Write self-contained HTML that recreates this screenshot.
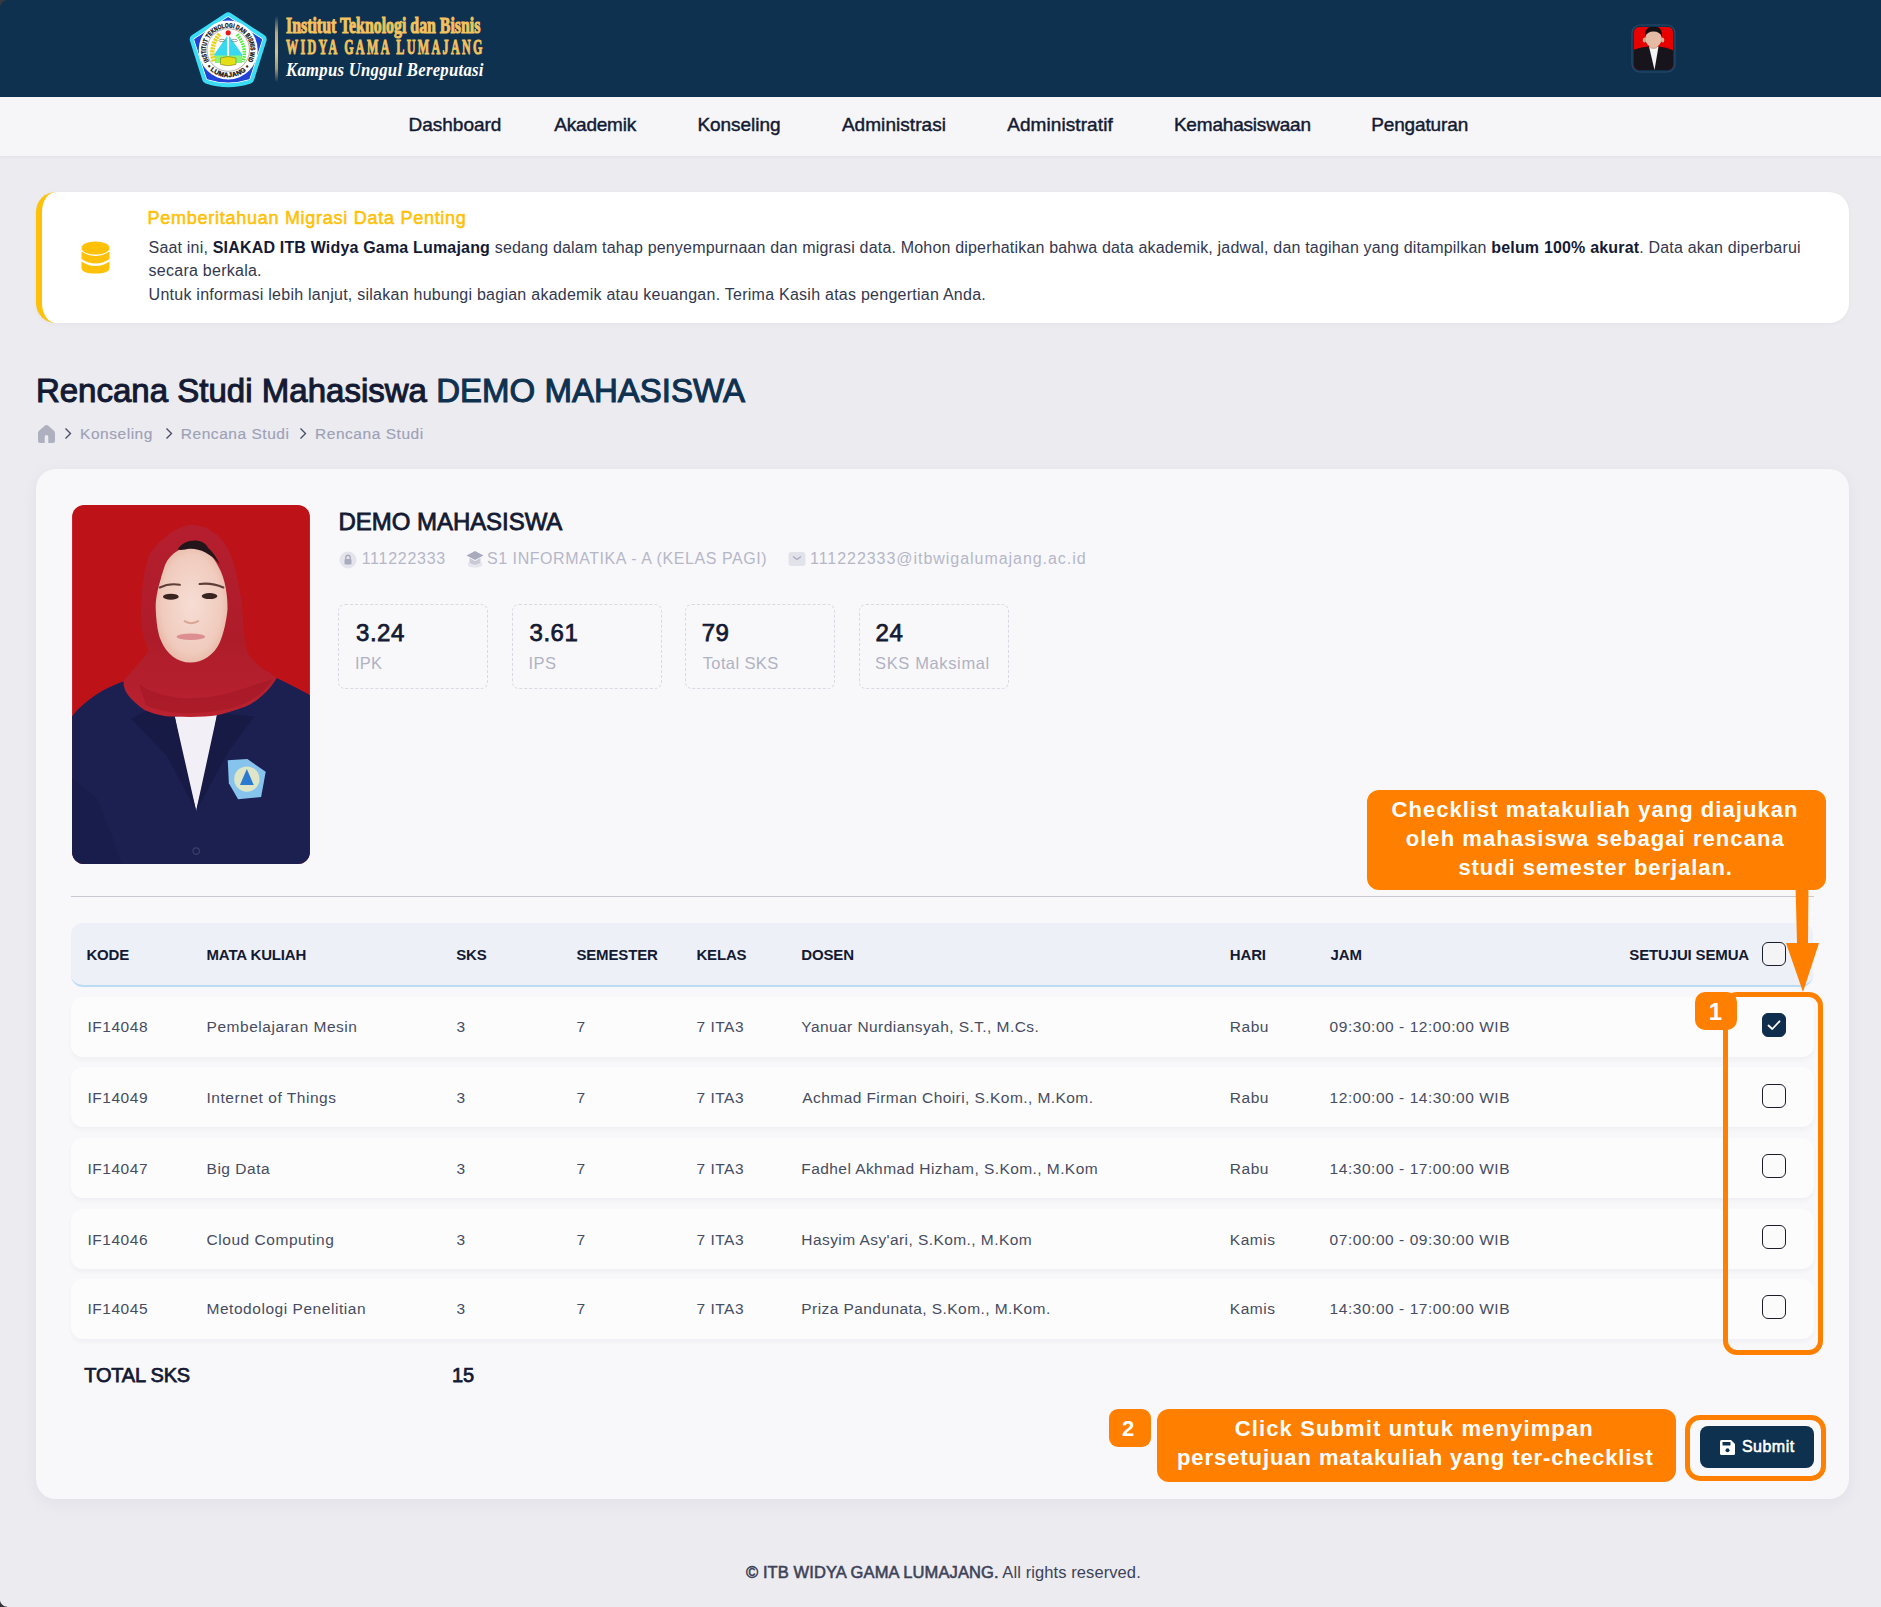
<!DOCTYPE html>
<html><head><meta charset="utf-8">
<style>
*{box-sizing:border-box;margin:0;padding:0}
html,body{width:1881px;height:1607px;overflow:hidden}
body{position:relative;background:#ebebf0;font-family:"Liberation Sans",sans-serif;color:#141a33}
.t{position:absolute;white-space:pre;font-family:"Liberation Sans",sans-serif}
.b{position:absolute}
#hdr{left:0;top:0;width:1881px;height:97px;background:#0f3150}
#nav{left:0;top:97px;width:1881px;height:59px;background:#f6f6f8;box-shadow:0 1px 3px rgba(40,40,80,0.05)}
#alert{left:36px;top:192px;width:1813px;height:131px;background:#fff;border-left:6px solid #ffc107;border-radius:20px;box-shadow:0 1px 4px rgba(30,30,70,0.04)}
#card{left:36px;top:469px;width:1813px;height:1030px;background:#f8f8fa;border-radius:20px;box-shadow:0 4px 16px rgba(30,30,70,0.05)}
.stat{top:604px;width:150px;height:85px;border:1px dashed #d8d9e2;border-radius:7px}
.row{left:71px;width:1743px;height:60px;background:#fcfcfd;border-radius:12px;box-shadow:0 3px 5px rgba(40,40,90,0.035)}
.cb{left:1762px;width:24px;height:24px;border:1.5px solid #1b1d2b;border-radius:6px;background:#fbfbfc}
.org{background:#ff8000}
</style></head>
<body>
<div class="b" id="hdr"></div>
<div class="b" id="nav"></div>

<!-- logo -->
<svg class="b" style="left:180px;top:0px" width="100" height="97" viewBox="180 0 100 97">
  <defs>
    <path id="arcT" d="M208.89 61.15 A22.3 22.3 0 1 1 247.51 61.15"/>
    <path id="arcB" d="M203.46 61.54 A27.3 27.3 0 0 0 252.94 61.54"/>
  </defs>
  <path d="M228.2 17.6 L261.4 39.5 L249 78.6 Q228.2 85.6 207.4 78.6 L195 39.5 Z" fill="#3adcf6" stroke="#3adcf6" stroke-width="10.5" stroke-linejoin="round"/>
  <path d="M228.2 16.6 L262.6 39 L249.6 79.4 Q228.2 86.3 206.8 79.4 L193.8 39 Z" fill="none" stroke="#ffffff" stroke-width="1" stroke-linejoin="round"/>
  <path d="M228.2 18 L261.4 39.6 L248.8 78.6 Q228.2 85 207.6 78.6 L195 39.6 Z" fill="#2343d6" stroke="#2343d6" stroke-width="1.5" stroke-linejoin="round"/>
  <circle cx="228.2" cy="50" r="29.5" fill="#ffffff"/>
  <text font-family="Liberation Sans" font-weight="700" font-size="6.6" fill="#111" stroke="#111" stroke-width="0.3"><textPath href="#arcT" textLength="115" lengthAdjust="spacingAndGlyphs">INSTITUT TEKNOLOGI DAN BISNIS WIDYA GAMA</textPath></text>
  <text font-family="Liberation Sans" font-weight="700" font-size="6.6" fill="#111" stroke="#111" stroke-width="0.3" letter-spacing="0.3"><textPath href="#arcB" startOffset="50%" text-anchor="middle">• LUMAJANG •</textPath></text>
  <circle cx="228.2" cy="50" r="21.3" fill="#fff" stroke="#9a9a9a" stroke-width="0.8"/>
  <path d="M219.5 34 Q209 47 214 62" fill="none" stroke="#e6d41a" stroke-width="4.5" stroke-dasharray="2.2 0.8"/>
  <path d="M237 34.5 Q247.5 47 243 62" fill="none" stroke="#4ded3a" stroke-width="3.5" stroke-dasharray="1.6 1"/>
  <rect x="215" y="54.5" width="27" height="8.5" fill="#5ef04a" opacity="0.75"/>
  <path d="M228.2 34.5 L213.5 55.5 L243 55.5 Z" fill="#38d8ef"/>
  <rect x="227.3" y="35" width="1.8" height="21" fill="#ffffff"/>
  <ellipse cx="222" cy="40.5" rx="3" ry="1.2" fill="none" stroke="#777" stroke-width="0.7"/>
  <ellipse cx="234.5" cy="40.5" rx="3" ry="1.2" fill="none" stroke="#777" stroke-width="0.7"/>
  <circle cx="228.2" cy="32.8" r="2.6" fill="#e8181a"/>
  <path d="M220.5 58 Q228.2 55 236 58 L236 64.5 Q228.2 67 220.5 64.5 Z" fill="#e4de16" stroke="#6a6a20" stroke-width="0.5"/>
</svg>
<div class="b" style="left:274.5px;top:16px;width:3px;height:66px;background:linear-gradient(#0f3150,#b9a878 25%,#d6c288 55%,#a89870 80%,#0f3150)"></div>
<div class="t" style="left:286px;top:15px;font-family:'Liberation Serif',serif;font-weight:700;font-size:22.5px;line-height:22.5px;color:#f2c35e;transform:scaleX(0.705);transform-origin:0 0;-webkit-text-stroke:1px #f2c35e">Institut Teknologi dan Bisnis</div>
<div class="t" style="left:286px;top:35.5px;font-family:'Liberation Serif',serif;font-weight:700;font-size:22px;line-height:22px;color:#f2c35e;transform:scaleX(0.55);transform-origin:0 0;letter-spacing:4.2px;-webkit-text-stroke:1px #f2c35e">WIDYA GAMA LUMAJANG</div>
<div class="t" style="left:286px;top:60px;font-family:'Liberation Serif',serif;font-style:italic;font-weight:700;font-size:19px;line-height:19px;color:#ffffff;transform:scaleX(0.88);transform-origin:0 0;letter-spacing:0.3px">Kampus Unggul Bereputasi</div>

<!-- avatar -->
<svg class="b" style="left:1631px;top:24px" width="45" height="49" viewBox="0 0 45 49">
  <rect x="1" y="1" width="43" height="47" rx="8" fill="none" stroke="#4a6a88" stroke-width="1.2" opacity="0.45"/>
  <defs><clipPath id="av"><rect x="3" y="3" width="39" height="43" rx="5"/></clipPath></defs>
  <g clip-path="url(#av)">
    <rect x="0" y="0" width="45" height="49" fill="#e60000"/>
    <path d="M0 27 Q8 23 18 22.5 L27.5 22.5 Q37 23 45 28 L45 49 L0 49 Z" fill="#18141c"/>
    <path d="M18 22.5 L27.5 22.5 L23.5 46 Z" fill="#f4f4f4"/>
    <ellipse cx="13.3" cy="16" rx="1.6" ry="2.5" fill="#d8ab95"/>
    <ellipse cx="31.7" cy="16" rx="1.6" ry="2.5" fill="#d8ab95"/>
    <path d="M18.5 20 L26.5 20 L26 24 Q22.5 26 19 24 Z" fill="#d8ab95"/>
    <ellipse cx="22.5" cy="14.5" rx="8.3" ry="9" fill="#e4bca6"/>
    <path d="M14 13 Q13.5 2 22.5 2.5 Q31.5 2 31 13 Q29 7.5 22.5 7.5 Q16 7.5 14 13 Z" fill="#141014"/>
  </g>
</svg>

<!-- alert -->
<div class="b" id="alert"></div>
<svg class="b" style="left:81px;top:241px" width="29" height="33" viewBox="0 0 29 33">
  <ellipse cx="14.5" cy="7" rx="14" ry="6.6" fill="#ffc107"/>
  <path d="M0.5 10.5 Q14.5 19.5 28.5 10.5 L28.5 18 Q14.5 27 0.5 18 Z" fill="#ffc107"/>
  <path d="M0.5 20.5 Q14.5 29.5 28.5 20.5 L28.5 26.5 Q28.5 32.5 14.5 32.5 Q0.5 32.5 0.5 26.5 Z" fill="#ffc107"/>
</svg>

<!-- breadcrumb icons -->
<svg class="b" style="left:37px;top:424px" width="19" height="19" viewBox="0 0 19 19">
  <path d="M1 9.2 Q1 7.6 2.3 6.5 L7.4 2 Q9.5 0.2 11.6 2 L16.7 6.5 Q18 7.6 18 9.2 L18 17 Q18 19 16 19 L11.3 19 L11.3 12.8 Q11.3 11 9.5 11 Q7.7 11 7.7 12.8 L7.7 19 L3 19 Q1 19 1 17 Z" fill="#aeb0c0"/>
</svg>
<svg class="b" style="left:62px;top:426px" width="12" height="15" viewBox="0 0 12 15"><path d="M3.5 2.5 L8.5 7.5 L3.5 12.5" fill="none" stroke="#484d66" stroke-width="1.35"/></svg>
<svg class="b" style="left:163px;top:426px" width="12" height="15" viewBox="0 0 12 15"><path d="M3.5 2.5 L8.5 7.5 L3.5 12.5" fill="none" stroke="#484d66" stroke-width="1.35"/></svg>
<svg class="b" style="left:297px;top:426px" width="12" height="15" viewBox="0 0 12 15"><path d="M3.5 2.5 L8.5 7.5 L3.5 12.5" fill="none" stroke="#484d66" stroke-width="1.35"/></svg>

<!-- card -->
<div class="b" id="card"></div>

<!-- photo -->
<svg class="b" style="left:70px;top:500px" width="245" height="370" viewBox="0 0 1064 1607">
  <defs><clipPath id="ph"><rect x="9" y="22" width="1033" height="1559" rx="52"/></clipPath>
  <radialGradient id="skin" cx="0.5" cy="0.5" r="0.6"><stop offset="0" stop-color="#f7ddd5"/><stop offset="0.7" stop-color="#f0cbbd"/><stop offset="1" stop-color="#e2ad9c"/></radialGradient>
  <linearGradient id="hij" x1="0" y1="0" x2="0" y2="1"><stop offset="0" stop-color="#b51e2e"/><stop offset="0.6" stop-color="#ae1c2a"/><stop offset="1" stop-color="#ba2230"/></linearGradient></defs>
  <g clip-path="url(#ph)">
    <rect x="0" y="0" width="1064" height="1607" fill="#bd1218"/>
    <path d="M0 950 C60 870 150 815 240 785 L460 940 L640 925 L880 765 C950 795 1010 830 1064 860 L1064 1607 L0 1607 Z" fill="#1b2050"/>
    <path d="M120 1300 C160 1400 200 1500 230 1607 L0 1607 L0 1200 Z" fill="#181d48" opacity="0.7"/>
    <path d="M455 940 L640 925 L610 1100 L548 1350 L495 1150 Z" fill="#f2eff6"/>
    <path d="M265 950 L330 915 L455 940 L548 1350 L420 1110 Z" fill="#161a44"/>
    <path d="M800 940 L640 925 L548 1350 L690 1090 Z" fill="#161a44"/>
    <path d="M520 108 C470 115 400 160 352 227 C325 270 312 380 309 465 C308 540 315 600 341 654 C320 690 270 740 233 784 C228 820 250 860 325 913 C380 935 420 942 455 940 C520 944 590 942 639 935 C700 920 760 900 785 886 C830 860 870 820 898 773 C870 750 850 740 838 735 C800 700 775 680 768 654 C758 600 752 560 752 519 C748 450 740 400 730 357 C720 300 705 260 693 227 C670 180 640 150 628 146 C600 120 560 108 520 108 Z" fill="url(#hij)"/>
    <path d="M300 800 C400 870 560 880 720 830 C780 810 840 790 880 778 C850 830 790 880 700 905 C560 935 420 935 330 890 Z" fill="#9c1522" opacity="0.45"/>
    <path d="M536 200 C470 205 420 245 406 303 C385 370 372 420 372 465 C374 525 380 575 394 608 C420 672 468 706 522 706 C576 706 626 672 650 620 C668 578 680 522 684 476 C686 420 674 340 646 292 C622 240 582 205 536 200 Z" fill="url(#skin)"/>
    <path d="M468 214 C495 170 575 160 600 208 C620 225 640 255 650 280 C610 230 560 210 520 212 C500 214 480 222 468 214 Z" fill="#24151a"/>
    <path d="M390 380 Q430 360 477 368" fill="none" stroke="#5e3e38" stroke-width="9" stroke-linecap="round"/>
    <path d="M563 365 Q615 358 666 380" fill="none" stroke="#5e3e38" stroke-width="9" stroke-linecap="round"/>
    <ellipse cx="438" cy="420" rx="34" ry="13" fill="#3a2420"/>
    <ellipse cx="606" cy="417" rx="34" ry="13" fill="#3a2420"/>
    <path d="M495 525 Q525 545 560 525" fill="none" stroke="#d9a595" stroke-width="9"/>
    <ellipse cx="525" cy="594" rx="62" ry="14" fill="#db8f90"/>
    <path d="M685 1130 L770 1125 L850 1180 L830 1290 L730 1300 L690 1230 Z" fill="#86c4ee"/>
    <circle cx="768" cy="1212" r="55" fill="#dfe6c8"/>
    <path d="M768 1168 L738 1238 L798 1238 Z" fill="#2a7ad0"/>
    <circle cx="548" cy="1525" r="14" fill="none" stroke="#3a3f6a" stroke-width="5"/>
  </g>
</svg>

<!-- info icons -->
<svg class="b" style="left:339px;top:551px" width="18" height="18" viewBox="0 0 18 18">
  <circle cx="9" cy="9" r="8.5" fill="#e4e5ec"/>
  <rect x="5.5" y="8" width="7" height="5.5" rx="1" fill="#a9abbd"/>
  <path d="M6.8 8 L6.8 6.5 Q6.8 4.3 9 4.3 Q11.2 4.3 11.2 6.5 L11.2 8" fill="none" stroke="#a9abbd" stroke-width="1.4"/>
</svg>
<svg class="b" style="left:466px;top:550px" width="18" height="19" viewBox="0 0 18 19">
  <path d="M9 1 L17.5 5.5 L9 10 L0.5 5.5 Z" fill="#a9abbd"/>
  <path d="M3.5 8 L3.5 13 Q9 17 14.5 13 L14.5 8 L9 11 Z" fill="#c9cad6"/>
  <path d="M2 12 Q9 19 16 12 L16 16 Q9 19 2 16 Z" fill="#e4e5ec"/>
</svg>
<svg class="b" style="left:788px;top:551px" width="18" height="16" viewBox="0 0 18 16">
  <rect x="0.5" y="1" width="17" height="14" rx="3" fill="#e1e2ea"/>
  <path d="M5 5.5 L9 8.5 L13 5.5" fill="none" stroke="#a9abbd" stroke-width="1.3"/>
</svg>

<!-- stats -->
<div class="b stat" style="left:338px"></div>
<div class="b stat" style="left:512px"></div>
<div class="b stat" style="left:685px"></div>
<div class="b stat" style="left:859px"></div>

<!-- divider -->
<div class="b" style="left:71px;top:896px;width:1743px;height:1px;background:#c8c9d3"></div>

<!-- table header -->
<div class="b" style="left:71px;top:923px;width:1742px;height:64px;background:#edf0f7;border-radius:12px;border-bottom:2px solid #bcdcf4"></div>
<div class="b cb" style="top:942px;background:#f4f4f6"></div>

<!-- rows -->
<div class="b row" style="top:997px"></div>
<div class="b row" style="top:1067px"></div>
<div class="b row" style="top:1138px"></div>
<div class="b row" style="top:1209px"></div>
<div class="b row" style="top:1279px"></div>

<div class="b cb" style="top:1013px;background:#0f2d4c;border-color:#0f2d4c"></div>
<svg class="b" style="left:1762px;top:1013px" width="24" height="24" viewBox="0 0 24 24"><path d="M6.5 12.5 L10.3 16 L17.5 8.3" fill="none" stroke="#fff" stroke-width="1.8" stroke-linecap="round" stroke-linejoin="round"/></svg>
<div class="b cb" style="top:1084px"></div>
<div class="b cb" style="top:1154px"></div>
<div class="b cb" style="top:1225px"></div>
<div class="b cb" style="top:1295px"></div>

<!-- submit -->
<div class="b" style="left:1700px;top:1426px;width:114px;height:42px;background:#0f3150;border-radius:8px"></div>
<svg class="b" style="left:1720px;top:1440px" width="15" height="15" viewBox="0 0 15 15">
  <path d="M1.5 0 L11 0 L15 4 L15 13.5 Q15 15 13.5 15 L1.5 15 Q0 15 0 13.5 L0 1.5 Q0 0 1.5 0 Z" fill="#fff"/>
  <rect x="2.5" y="2" width="8" height="3.5" rx="0.5" fill="#0f3150"/>
  <circle cx="7.5" cy="10.3" r="2" fill="#0f3150"/>
</svg>

<!-- annotations -->
<div class="b org" style="left:1367px;top:790px;width:459px;height:100px;border-radius:12px"></div>
<svg class="b" style="left:1780px;top:885px" width="45" height="110" viewBox="0 0 45 110">
  <path d="M15.5 0 L28.5 0 L28 58 L39 58 L23 107 L6 58 L17 58 Z" fill="#ff8000"/>
</svg>
<div class="b" style="left:1723px;top:992px;width:100px;height:363px;border:5px solid #ff8000;border-radius:14px"></div>
<div class="b org" style="left:1695px;top:992px;width:42px;height:38px;border-radius:10px"></div>
<div class="b" style="left:1685px;top:1415px;width:141px;height:66px;border:5px solid #ff8000;border-radius:15px"></div>
<div class="b org" style="left:1109px;top:1409px;width:42px;height:38px;border-radius:9px"></div>
<div class="b org" style="left:1157px;top:1409px;width:519px;height:73px;border-radius:12px"></div>


<svg class="b" style="left:0;top:0" width="12" height="12" viewBox="0 0 12 12"><path d="M0 0 L8 0 A8 8 0 0 0 0 8 Z" fill="#403a3c" opacity="0.85"/></svg>
<svg class="b" style="left:0;top:1595px" width="12" height="12" viewBox="0 0 12 12"><path d="M0 2.5 A8 8 0 0 0 8 12 L0 12 Z" fill="#333335"/></svg>
<div class="t" style="left:408.6px;top:115.15px;font-size:19px;line-height:19px;font-weight:400;color:#141a33;letter-spacing:-0.025px;-webkit-text-stroke:0.45px #141a33;">Dashboard</div>
<div class="t" style="left:554.3px;top:115.15px;font-size:19px;line-height:19px;font-weight:400;color:#141a33;letter-spacing:-0.214px;-webkit-text-stroke:0.45px #141a33;">Akademik</div>
<div class="t" style="left:697.5px;top:115.15px;font-size:19px;line-height:19px;font-weight:400;color:#141a33;letter-spacing:-0.062px;-webkit-text-stroke:0.45px #141a33;">Konseling</div>
<div class="t" style="left:841.9px;top:115.15px;font-size:19px;line-height:19px;font-weight:400;color:#141a33;letter-spacing:0.055px;-webkit-text-stroke:0.45px #141a33;">Administrasi</div>
<div class="t" style="left:1007.2px;top:115.15px;font-size:19px;line-height:19px;font-weight:400;color:#141a33;letter-spacing:0.083px;-webkit-text-stroke:0.45px #141a33;">Administratif</div>
<div class="t" style="left:1173.9px;top:115.15px;font-size:19px;line-height:19px;font-weight:400;color:#141a33;letter-spacing:-0.192px;-webkit-text-stroke:0.45px #141a33;">Kemahasiswaan</div>
<div class="t" style="left:1371.2px;top:115.15px;font-size:19px;line-height:19px;font-weight:400;color:#141a33;letter-spacing:-0.133px;-webkit-text-stroke:0.45px #141a33;">Pengaturan</div>
<div class="t" style="left:147.6px;top:209.2px;font-size:18px;line-height:18px;font-weight:400;color:#ffc107;letter-spacing:0.73px;-webkit-text-stroke:0.55px #ffc107;">Pemberitahuan Migrasi Data Penting</div>
<div class="t" style="left:148.6px;top:240.0px;font-size:16px;line-height:16px;font-weight:400;color:#33384f;letter-spacing:0.183px;">Saat ini, <b style="color:#141a33">SIAKAD ITB Widya Gama Lumajang</b> sedang dalam tahap penyempurnaan dan migrasi data. Mohon diperhatikan bahwa data akademik, jadwal, dan tagihan yang ditampilkan <b style="color:#141a33">belum 100% akurat</b>. Data akan diperbarui</div>
<div class="t" style="left:148.6px;top:263.3px;font-size:16px;line-height:16px;font-weight:400;color:#33384f;letter-spacing:0.255px;">secara berkala.</div>
<div class="t" style="left:148.6px;top:286.6px;font-size:16px;line-height:16px;font-weight:400;color:#33384f;letter-spacing:0.255px;">Untuk informasi lebih lanjut, silakan hubungi bagian akademik atau keuangan. Terima Kasih atas pengertian Anda.</div>
<div class="t" style="left:35.9px;top:373.75px;font-size:33px;line-height:33px;font-weight:400;color:#141a33;letter-spacing:0.016px;-webkit-text-stroke:1.05px #141a33;">Rencana Studi Mahasiswa <span style="color:#0f3150;-webkit-text-stroke:1.05px #0f3150">DEMO MAHASISWA</span></div>
<div class="t" style="left:80.0px;top:425.82px;font-size:15.5px;line-height:15.5px;font-weight:400;color:#9da1b6;letter-spacing:0.54px;-webkit-text-stroke:0.15px #9da1b6;">Konseling</div>
<div class="t" style="left:180.8px;top:425.82px;font-size:15.5px;line-height:15.5px;font-weight:400;color:#9da1b6;letter-spacing:0.54px;-webkit-text-stroke:0.15px #9da1b6;">Rencana Studi</div>
<div class="t" style="left:315.0px;top:425.82px;font-size:15.5px;line-height:15.5px;font-weight:400;color:#9da1b6;letter-spacing:0.54px;-webkit-text-stroke:0.15px #9da1b6;">Rencana Studi</div>
<div class="t" style="left:338.6px;top:509.6px;font-size:24px;line-height:24px;font-weight:400;color:#141a33;letter-spacing:-0.054px;-webkit-text-stroke:0.8px #141a33;">DEMO MAHASISWA</div>
<div class="t" style="left:361.7px;top:551.0px;font-size:16px;line-height:16px;font-weight:400;color:#b5b7c7;letter-spacing:0.725px;">111222333</div>
<div class="t" style="left:486.9px;top:551.0px;font-size:16px;line-height:16px;font-weight:400;color:#b5b7c7;letter-spacing:0.57px;">S1 INFORMATIKA - A (KELAS PAGI)</div>
<div class="t" style="left:810.0px;top:551.0px;font-size:16px;line-height:16px;font-weight:400;color:#b5b7c7;letter-spacing:0.957px;">111222333@itbwigalumajang.ac.id</div>
<div class="t" style="left:356.0px;top:621.4px;font-size:24px;line-height:24px;font-weight:400;color:#141a33;letter-spacing:0.55px;-webkit-text-stroke:0.75px #141a33;">3.24</div>
<div class="t" style="left:529.5px;top:621.4px;font-size:24px;line-height:24px;font-weight:400;color:#141a33;letter-spacing:0.55px;-webkit-text-stroke:0.75px #141a33;">3.61</div>
<div class="t" style="left:701.7px;top:621.4px;font-size:24px;line-height:24px;font-weight:400;color:#141a33;letter-spacing:0.55px;-webkit-text-stroke:0.75px #141a33;">79</div>
<div class="t" style="left:875.5px;top:621.4px;font-size:24px;line-height:24px;font-weight:400;color:#141a33;letter-spacing:0.55px;-webkit-text-stroke:0.75px #141a33;">24</div>
<div class="t" style="left:355.0px;top:654.98px;font-size:16.5px;line-height:16.5px;font-weight:400;color:#b0b2c3;letter-spacing:0.2px;">IPK</div>
<div class="t" style="left:528.5px;top:654.98px;font-size:16.5px;line-height:16.5px;font-weight:400;color:#b0b2c3;letter-spacing:0.408px;">IPS</div>
<div class="t" style="left:702.7px;top:654.98px;font-size:16.5px;line-height:16.5px;font-weight:400;color:#b0b2c3;letter-spacing:0.387px;">Total SKS</div>
<div class="t" style="left:875.0px;top:654.98px;font-size:16.5px;line-height:16.5px;font-weight:400;color:#b0b2c3;letter-spacing:0.636px;">SKS Maksimal</div>
<div class="t" style="left:86.4px;top:947.25px;font-size:15px;line-height:15px;font-weight:700;color:#141a33;letter-spacing:-0.15px;">KODE</div>
<div class="t" style="left:206.5px;top:947.25px;font-size:15px;line-height:15px;font-weight:700;color:#141a33;letter-spacing:-0.15px;">MATA KULIAH</div>
<div class="t" style="left:456.2px;top:947.25px;font-size:15px;line-height:15px;font-weight:700;color:#141a33;letter-spacing:-0.15px;">SKS</div>
<div class="t" style="left:576.4px;top:947.25px;font-size:15px;line-height:15px;font-weight:700;color:#141a33;letter-spacing:-0.15px;">SEMESTER</div>
<div class="t" style="left:696.4px;top:947.25px;font-size:15px;line-height:15px;font-weight:700;color:#141a33;letter-spacing:-0.15px;">KELAS</div>
<div class="t" style="left:801.3px;top:947.25px;font-size:15px;line-height:15px;font-weight:700;color:#141a33;letter-spacing:-0.15px;">DOSEN</div>
<div class="t" style="left:1229.8px;top:947.25px;font-size:15px;line-height:15px;font-weight:700;color:#141a33;letter-spacing:-0.15px;">HARI</div>
<div class="t" style="left:1330.6px;top:947.25px;font-size:15px;line-height:15px;font-weight:700;color:#141a33;letter-spacing:-0.15px;">JAM</div>
<div class="t" style="left:1629.3px;top:947.25px;font-size:15px;line-height:15px;font-weight:700;color:#141a33;letter-spacing:-0.15px;">SETUJUI SEMUA</div>
<div class="t" style="left:87.4px;top:1019.33px;font-size:15.5px;line-height:15.5px;font-weight:400;color:#474c60;letter-spacing:0.54px;">IF14048</div>
<div class="t" style="left:206.5px;top:1019.33px;font-size:15.5px;line-height:15.5px;font-weight:400;color:#474c60;letter-spacing:0.54px;">Pembelajaran Mesin</div>
<div class="t" style="left:456.4px;top:1019.33px;font-size:15.5px;line-height:15.5px;font-weight:400;color:#474c60;letter-spacing:0.54px;">3</div>
<div class="t" style="left:576.4px;top:1019.33px;font-size:15.5px;line-height:15.5px;font-weight:400;color:#474c60;letter-spacing:0.54px;">7</div>
<div class="t" style="left:696.4px;top:1019.33px;font-size:15.5px;line-height:15.5px;font-weight:400;color:#474c60;letter-spacing:0.54px;">7 ITA3</div>
<div class="t" style="left:801.3px;top:1019.33px;font-size:15.5px;line-height:15.5px;font-weight:400;color:#474c60;letter-spacing:0.43px;">Yanuar Nurdiansyah, S.T., M.Cs.</div>
<div class="t" style="left:1229.8px;top:1019.33px;font-size:15.5px;line-height:15.5px;font-weight:400;color:#474c60;letter-spacing:0.54px;">Rabu</div>
<div class="t" style="left:1329.6px;top:1019.33px;font-size:15.5px;line-height:15.5px;font-weight:400;color:#474c60;letter-spacing:0.54px;">09:30:00 - 12:00:00 WIB</div>
<div class="t" style="left:87.4px;top:1089.83px;font-size:15.5px;line-height:15.5px;font-weight:400;color:#474c60;letter-spacing:0.54px;">IF14049</div>
<div class="t" style="left:206.5px;top:1089.83px;font-size:15.5px;line-height:15.5px;font-weight:400;color:#474c60;letter-spacing:0.54px;">Internet of Things</div>
<div class="t" style="left:456.4px;top:1089.83px;font-size:15.5px;line-height:15.5px;font-weight:400;color:#474c60;letter-spacing:0.54px;">3</div>
<div class="t" style="left:576.4px;top:1089.83px;font-size:15.5px;line-height:15.5px;font-weight:400;color:#474c60;letter-spacing:0.54px;">7</div>
<div class="t" style="left:696.4px;top:1089.83px;font-size:15.5px;line-height:15.5px;font-weight:400;color:#474c60;letter-spacing:0.54px;">7 ITA3</div>
<div class="t" style="left:802.3px;top:1089.83px;font-size:15.5px;line-height:15.5px;font-weight:400;color:#474c60;letter-spacing:0.43px;">Achmad Firman Choiri, S.Kom., M.Kom.</div>
<div class="t" style="left:1229.8px;top:1089.83px;font-size:15.5px;line-height:15.5px;font-weight:400;color:#474c60;letter-spacing:0.54px;">Rabu</div>
<div class="t" style="left:1329.6px;top:1089.83px;font-size:15.5px;line-height:15.5px;font-weight:400;color:#474c60;letter-spacing:0.54px;">12:00:00 - 14:30:00 WIB</div>
<div class="t" style="left:87.4px;top:1160.73px;font-size:15.5px;line-height:15.5px;font-weight:400;color:#474c60;letter-spacing:0.54px;">IF14047</div>
<div class="t" style="left:206.5px;top:1160.73px;font-size:15.5px;line-height:15.5px;font-weight:400;color:#474c60;letter-spacing:0.54px;">Big Data</div>
<div class="t" style="left:456.4px;top:1160.73px;font-size:15.5px;line-height:15.5px;font-weight:400;color:#474c60;letter-spacing:0.54px;">3</div>
<div class="t" style="left:576.4px;top:1160.73px;font-size:15.5px;line-height:15.5px;font-weight:400;color:#474c60;letter-spacing:0.54px;">7</div>
<div class="t" style="left:696.4px;top:1160.73px;font-size:15.5px;line-height:15.5px;font-weight:400;color:#474c60;letter-spacing:0.54px;">7 ITA3</div>
<div class="t" style="left:801.3px;top:1160.73px;font-size:15.5px;line-height:15.5px;font-weight:400;color:#474c60;letter-spacing:0.43px;">Fadhel Akhmad Hizham, S.Kom., M.Kom</div>
<div class="t" style="left:1229.8px;top:1160.73px;font-size:15.5px;line-height:15.5px;font-weight:400;color:#474c60;letter-spacing:0.54px;">Rabu</div>
<div class="t" style="left:1329.6px;top:1160.73px;font-size:15.5px;line-height:15.5px;font-weight:400;color:#474c60;letter-spacing:0.54px;">14:30:00 - 17:00:00 WIB</div>
<div class="t" style="left:87.4px;top:1231.62px;font-size:15.5px;line-height:15.5px;font-weight:400;color:#474c60;letter-spacing:0.54px;">IF14046</div>
<div class="t" style="left:206.5px;top:1231.62px;font-size:15.5px;line-height:15.5px;font-weight:400;color:#474c60;letter-spacing:0.54px;">Cloud Computing</div>
<div class="t" style="left:456.4px;top:1231.62px;font-size:15.5px;line-height:15.5px;font-weight:400;color:#474c60;letter-spacing:0.54px;">3</div>
<div class="t" style="left:576.4px;top:1231.62px;font-size:15.5px;line-height:15.5px;font-weight:400;color:#474c60;letter-spacing:0.54px;">7</div>
<div class="t" style="left:696.4px;top:1231.62px;font-size:15.5px;line-height:15.5px;font-weight:400;color:#474c60;letter-spacing:0.54px;">7 ITA3</div>
<div class="t" style="left:801.3px;top:1231.62px;font-size:15.5px;line-height:15.5px;font-weight:400;color:#474c60;letter-spacing:0.43px;">Hasyim Asy'ari, S.Kom., M.Kom</div>
<div class="t" style="left:1229.8px;top:1231.62px;font-size:15.5px;line-height:15.5px;font-weight:400;color:#474c60;letter-spacing:0.54px;">Kamis</div>
<div class="t" style="left:1329.6px;top:1231.62px;font-size:15.5px;line-height:15.5px;font-weight:400;color:#474c60;letter-spacing:0.54px;">07:00:00 - 09:30:00 WIB</div>
<div class="t" style="left:87.4px;top:1301.42px;font-size:15.5px;line-height:15.5px;font-weight:400;color:#474c60;letter-spacing:0.54px;">IF14045</div>
<div class="t" style="left:206.5px;top:1301.42px;font-size:15.5px;line-height:15.5px;font-weight:400;color:#474c60;letter-spacing:0.54px;">Metodologi Penelitian</div>
<div class="t" style="left:456.4px;top:1301.42px;font-size:15.5px;line-height:15.5px;font-weight:400;color:#474c60;letter-spacing:0.54px;">3</div>
<div class="t" style="left:576.4px;top:1301.42px;font-size:15.5px;line-height:15.5px;font-weight:400;color:#474c60;letter-spacing:0.54px;">7</div>
<div class="t" style="left:696.4px;top:1301.42px;font-size:15.5px;line-height:15.5px;font-weight:400;color:#474c60;letter-spacing:0.54px;">7 ITA3</div>
<div class="t" style="left:801.3px;top:1301.42px;font-size:15.5px;line-height:15.5px;font-weight:400;color:#474c60;letter-spacing:0.43px;">Priza Pandunata, S.Kom., M.Kom.</div>
<div class="t" style="left:1229.8px;top:1301.42px;font-size:15.5px;line-height:15.5px;font-weight:400;color:#474c60;letter-spacing:0.54px;">Kamis</div>
<div class="t" style="left:1329.6px;top:1301.42px;font-size:15.5px;line-height:15.5px;font-weight:400;color:#474c60;letter-spacing:0.54px;">14:30:00 - 17:00:00 WIB</div>
<div class="t" style="left:84.3px;top:1364.7px;font-size:20px;line-height:20px;font-weight:400;color:#141a33;letter-spacing:-0.2px;-webkit-text-stroke:0.75px #141a33;">TOTAL SKS</div>
<div class="t" style="left:451.9px;top:1364.7px;font-size:20px;line-height:20px;font-weight:400;color:#141a33;letter-spacing:0.1px;-webkit-text-stroke:0.75px #141a33;">15</div>
<div class="t" style="left:746.0px;top:1563.88px;font-size:16.5px;line-height:16.5px;font-weight:400;color:#3d4257;letter-spacing:0.091px;"><span style="-webkit-text-stroke:0.55px #3d4257">© ITB WIDYA GAMA LUMAJANG.</span> All rights reserved.</div>
<div class="t" style="left:1741.9px;top:1438.6px;font-size:16px;line-height:16px;font-weight:400;color:#ffffff;letter-spacing:0.5px;-webkit-text-stroke:0.55px #ffffff;">Submit</div>
<div class="t" style="left:1391.5px;top:799.2px;font-size:22px;line-height:22px;font-weight:700;color:#ffffff;letter-spacing:1.036px;">Checklist matakuliah yang diajukan</div>
<div class="t" style="left:1405.7px;top:827.6px;font-size:22px;line-height:22px;font-weight:700;color:#ffffff;letter-spacing:1.059px;">oleh mahasiswa sebagai rencana</div>
<div class="t" style="left:1458.4px;top:856.7px;font-size:22px;line-height:22px;font-weight:700;color:#ffffff;letter-spacing:0.943px;">studi semester berjalan.</div>
<div class="t" style="left:1234.7px;top:1418.0px;font-size:22px;line-height:22px;font-weight:700;color:#ffffff;letter-spacing:1.126px;">Click Submit untuk menyimpan</div>
<div class="t" style="left:1177.0px;top:1446.7px;font-size:22px;line-height:22px;font-weight:700;color:#ffffff;letter-spacing:0.923px;">persetujuan matakuliah yang ter-checklist</div>
<div class="t" style="left:1708.7px;top:999.6px;font-size:24px;line-height:24px;font-weight:700;color:#ffffff;letter-spacing:0.0px;">1</div>
<div class="t" style="left:1122.0px;top:1418.0px;font-size:22px;line-height:22px;font-weight:700;color:#ffffff;letter-spacing:0.0px;">2</div>
</body></html>
